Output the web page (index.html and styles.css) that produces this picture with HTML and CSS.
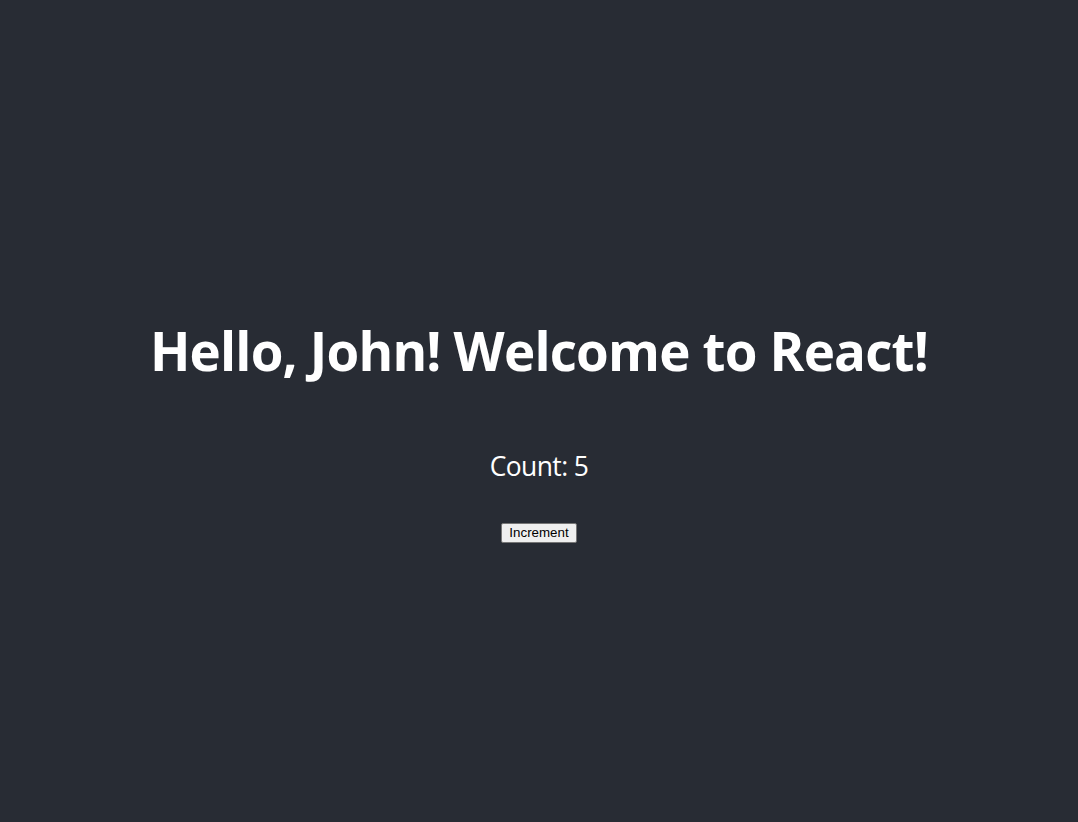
FILE: index.html
```html
<!DOCTYPE html>
<html lang="en">
<head>
<meta charset="utf-8">
<title>React App</title>
<link rel="stylesheet" href="styles.css">
</head>
<body>
<div class="app">
  <header class="app-header">
    <h1 class="title">Hello, John! Welcome to React!</h1>
    <p class="count">Count: 5</p>
    <button class="btn" type="button">Increment</button>
  </header>
</div>
</body>
</html>
```

FILE: styles.css
```css
html, body {
  margin: 0;
  padding: 0;
}
body {
  font-family: "Open Sans", "Noto Sans", sans-serif;
  background: #282c34;
}
.app {
  text-align: center;
}
.app-header {
  background-color: #282c34;
  min-height: 100vh;
  display: flex;
  flex-direction: column;
  align-items: center;
  justify-content: center;
  font-size: calc(10px + 2vmin);
  color: #ffffff;
}
.title {
  font-size: 2em;
  font-weight: 700;
  margin: 0.67em 0;
  letter-spacing: -0.8px;
}
.count {
  margin: 1em 0;
  letter-spacing: -0.6px;
}
.btn {
  margin-top: 13px;
  font-family: "Liberation Sans", Arial, sans-serif;
  font-size: 13.333px;
  color: #000000;
  background: #efefef;
  border: 1px solid #767676;
  border-radius: 2px;
  padding: 1px 7px 2px;
  line-height: normal;
}
```
